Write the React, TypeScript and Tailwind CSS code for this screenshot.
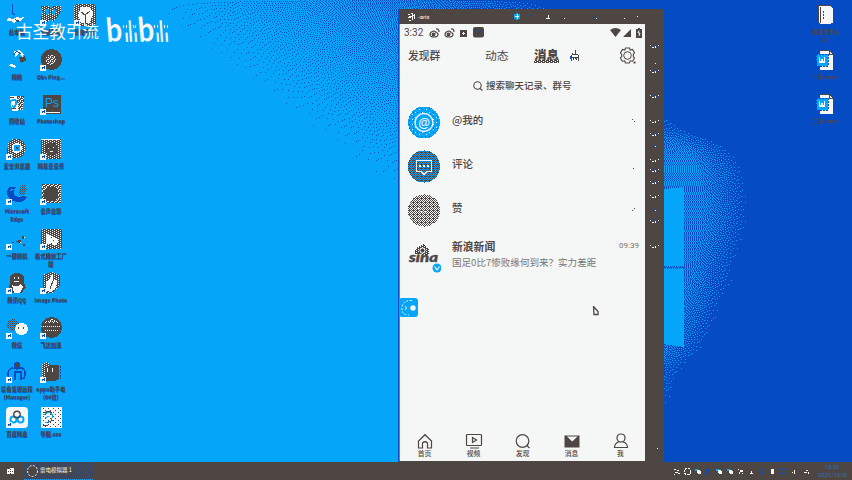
import React, { useMemo } from "react";

const LIGHT = "#05a5f9";
const DEEP = "#054bc3";
const INK = "#4e4643";
const PAPER = "#f5f7f6";

const W = 852;
const H = 462;

// Right outline of the glow behind the window logo, as [y, x] pairs.
const EDGE: number[][] = [
  [100, 655], [108, 665], [118, 674], [130, 692], [138, 716], [150, 734], [170, 745],
  [200, 749], [225, 748], [250, 739], [283, 732], [300, 724], [335, 711], [350, 702],
  [360, 692], [370, 682], [395, 673], [412, 664],
];

function edgeAt(y: number): number {
  for (let i = 1; i < EDGE.length; i++) {
    const [y0, x0] = EDGE[i - 1];
    const [y1, x1] = EDGE[i];
    if (y >= y0 && y <= y1) return x0 + ((x1 - x0) * (y - y0)) / (y1 - y0);
  }
  return 0;
}

function deepness(x: number, y: number): number {
  if (x >= 660) {
    const gap = edgeAt(y) - x;
    if (gap <= 0) return 1;
    const top = Math.max(0, Math.min(1, (y - 112) / 45));
    return 1 - Math.min(0.5, (gap / 48) * 0.5) * (0.35 + 0.65 * top);
  }
  const d = ((x - 130) * 0.74 - y) / 1.24;
  if (d <= 0) return 0;
  return Math.min(1, Math.pow(d / 275, 1.4) * 1.15);
}

function wallpaperPath(): string {
  let err = new Float32Array(W + 2);
  let out = "";
  for (let y = 0; y < H; y++) {
    const next = new Float32Array(W + 2);
    let run = -1;
    for (let x = 0; x < W; x++) {
      const base = deepness(x, y);
      let on = false;
      if (base >= 1) on = true;
      else if (base > 0.004) {
        const v = base + err[x + 1];
        on = v > 0.5;
        const e = v - (on ? 1 : 0);
        err[x + 2] += (e * 7) / 16;
        next[x] += (e * 3) / 16;
        next[x + 1] += (e * 5) / 16;
        next[x + 2] += e / 16;
      }
      if (on && run < 0) run = x;
      if ((!on || x === W - 1) && run >= 0) {
        const end = on ? x + 1 : x;
        out += `M${run} ${y}h${end - run}v1h${run - end}z`;
        run = -1;
      }
    }
    err = next;
  }
  return out;
}

// Pixels of a 32px disc for which the rule holds, as one path.
function discPath(rule: (x: number, y: number) => boolean): string {
  let out = "";
  for (let y = 0; y < 33; y++) {
    for (let x = 0; x < 32; x++) {
      const dx = x + 0.5 - 16;
      const dy = y + 0.5 - 16.5;
      if (dx * dx + dy * dy <= 258 && rule(x, y)) out += `M${x} ${y}h1v1h-1z`;
    }
  }
  return out;
}

const discChecks = discPath((x, y) => (x + y) % 2 === 0);
const discSparse = discPath((x, y) => (x + y) % 2 === 1 && x % 4 === 1 && y % 4 === 2);
const discDense = discPath((x, y) => (x + y) % 2 === 0 || (x % 4 === 1 && y % 4 === 0));

function Wallpaper() {
  const d = useMemo(wallpaperPath, []);
  return (
    <svg className="absolute inset-0" width={W} height={480} shapeRendering="crispEdges">
      <defs>
        <pattern id="ckInk" width="2" height="2" patternUnits="userSpaceOnUse">
          <path d="M0 0h1v1h-1zM1 1h1v1h-1z" fill={INK} />
        </pattern>
        <pattern id="ckDense" width="4" height="2" patternUnits="userSpaceOnUse">
          <rect width="4" height="2" fill={INK} />
          <path d="M0 0h1v1h-1zM2 1h1v1h-1z" fill={PAPER} />
        </pattern>
        <pattern id="ckWhite" width="4" height="4" patternUnits="userSpaceOnUse">
          <rect width="4" height="4" fill={INK} />
          <path d="M0 0h1v1h-1zM2 0h1v1h-1zM1 1h1v1h-1zM3 2h1v1h-1zM0 2h1v1h-1zM2 3h1v1h-1z" fill={PAPER} />
        </pattern>
        <pattern id="dotInk" width="5" height="4" patternUnits="userSpaceOnUse">
          <path d="M0 0h1v1h-1zM3 2h1v1h-1z" fill={INK} />
        </pattern>
        <pattern id="dotWhite" width="7" height="5" patternUnits="userSpaceOnUse">
          <path d="M0 1h1v1h-1zM4 3h1v1h-1z" fill={PAPER} />
        </pattern>
      </defs>
      <rect width={W} height={H} fill={LIGHT} />
      <path d={d} fill={DEEP} />
      <path d="M664 189l20-2v160l-20-3z" fill={LIGHT} />
      <path d="M664 266.500h21M665 268.500h20" stroke={DEEP} strokeDasharray="1 1" />
      <path d="M664 267.500h21" stroke={DEEP} strokeDasharray="2 1" />
    </svg>
  );
}

type Art = { art: React.ReactNode; label: string[]; plain?: boolean };

const columnA: Art[] = [
  { label: ["此电脑"], plain: true, art: <><path d="M6.500 0v9l2 2" stroke={DEEP} fill="none" /><path d="M2 14l5 1 4-2 3 1 4-1-3 4-4-1-3 3-3-2-4 0z" fill={PAPER} /><path d="M9 15l5 2-3 1z" fill={INK} /></> },
  { label: ["网络"], plain: true, art: <><path d="M8 2l5-1 5 4-1 3-4-3-4 3z" fill={PAPER} /><path d="M7 6l4-4 4 3M18 7l2 5" stroke={DEEP} fill="none" /><path d="M13 8l6 0 0 4-4 2z" fill={INK} /><path d="M2 16l4-1 4 2-1 2-3-1z" fill={PAPER} /></> },
  { label: ["回收站"], plain: true, art: <><path d="M4 3h14l-1 14-11 1z" fill="url(#ckWhite)" /><path d="M4 3h7l1 15-6 0z" fill={PAPER} /><path d="M5 8q6-4 5 3q-1 4-4 2" stroke={LIGHT} strokeWidth="2" fill="none" /><path d="M4 4l4 1M6 15l4 1" stroke={INK} /></> },
  { label: ["安全浏览器"], art: <><path d="M6 1h7l5 3 2 6-3 8-6 2H4l-3-5 1-9z" fill="url(#ckDense)" /><circle cx="11" cy="10" r="5" fill={PAPER} /><circle cx="11" cy="10" r="3.500" fill={LIGHT} /><path d="M10 9h2v2h-2z" fill={INK} /></> },
  { label: ["Microsoft", "Edge"], art: <><path d="M1 8q2-6 9-4l-2 3q-1 3 0 5 4 3 9 1l4 1q-4 6-10 5Q1 18 1 8z" fill={DEEP} /><path d="M14 3l5-2 2 5-3 6-5 0z" fill="url(#ckInk)" /><path d="M4 8l3-2" stroke={LIGHT} /></> },
  { label: ["一键刷机"], art: <><path d="M16 8h2v3h-2zM12 12h3v3h-3zM17 16h2v2h-2z" fill={INK} /><path d="M6 14h2M10 13h2" stroke={DEEP} /><path d="M18 9h1v1h-1zM14 14h1v1h-1z" fill={PAPER} /></> },
  { label: ["腾讯QQ"], art: <><path d="M4 7q0-6 7-6t7 6v4l2 5-2 1-2 4H6l-2-3-2-1 2-5z" fill={INK} /><path d="M6 13q5 3 9-1l2 3-3 6H8z" fill={PAPER} /><path d="M8 5h1v2h-1zM12 5h1v2h-1zM8 9h5v1h-5z" fill={PAPER} /></> },
  { label: ["微信"], art: <><ellipse cx="7" cy="8" rx="6" ry="6" fill="url(#ckInk)" /><ellipse cx="15.500" cy="12" rx="6.500" ry="6" fill={PAPER} /><path d="M12 10h1v2h-1zM17 10h1v2h-1z" fill={INK} /></> },
  { label: ["设备发现远程", "(Manager)"], art: <><path d="M3 17q-3-7 3-10l5 1 5-1q5 3 2 10l-3 1v-7h-6v8" fill="none" stroke={DEEP} strokeWidth="1.500" /><path d="M8 6q0-5 3-5t3 5z" fill={INK} stroke={DEEP} /></> },
  { label: ["百度网盘"], art: <g shapeRendering="auto"><rect x="0" y="1" width="22" height="21" rx="4" fill={PAPER} /><circle cx="7.500" cy="13.500" r="3" fill="none" stroke={LIGHT} strokeWidth="2" /><circle cx="14.500" cy="13.500" r="3" fill="none" stroke={LIGHT} strokeWidth="2" /><circle cx="11" cy="8.500" r="3.200" fill="none" stroke={INK} strokeWidth="1.400" /></g> },
];

const columnB: Art[] = [
  { label: ["视频剪辑"], art: <><path d="M1 2h8l2 3 2-3h8v5l-4 7-4 3-3-2-3 3-5 1-1-6 2-5z" fill="url(#ckDense)" /><path d="M5 5h4v5l-3 1zM13 5l4 1-3 6-2-3z" fill={LIGHT} /></> },
  { label: ["Obs Ping..."], art: <><circle cx="11.500" cy="10.500" r="10.500" fill={INK} /><circle cx="11" cy="11" r="5.500" fill="url(#ckWhite)" /></> },
  { label: ["Photoshop"], art: <><rect x="3" y="2" width="18" height="19" fill={INK} /><path d="M3 19.500h17" stroke={PAPER} /><text x="5" y="14" fontSize="12" className="font-['Liberation_Sans']" fill={LIGHT}>Ps</text></> },
  { label: ["网易云音乐"], art: <><rect x="1" y="1" width="20" height="20" rx="2" fill="url(#ckDense)" /><path d="M1 1.500h19" stroke={PAPER} /><circle cx="11.500" cy="11" r="6.500" fill={INK} /><path d="M8 10h1v1h-1zM13 9h1v1h-1zM10 13h3v1h-3z" fill={PAPER} /></> },
  { label: ["会声会影"], art: <><rect x="2" y="1" width="19" height="19" fill="url(#ckWhite)" /><circle cx="11" cy="11" r="7.500" fill={INK} /></> },
  { label: ["格式播放工厂", "版"], art: <><rect x="1" y="1" width="21" height="20" rx="3" fill="url(#ckDense)" /><path d="M6 5l12 6v4l-4 3-3-3-5 2z" fill={PAPER} /><path d="M11 9h1v1h-1zM13 12h1v1h-1z" fill={INK} /></> },
  { label: ["Image Photo"], art: <><path d="M3 3l8-3 9 3v10l-8 8H6l-3-3z" fill="url(#ckDense)" /><path d="M12 2l2 5 3 2-1 7-5 4-5-1 0-9 4-3z" fill={PAPER} /><path d="M10 17l4-11" stroke={INK} /></> },
  { label: ["飞达加速"], art: <><circle cx="11.500" cy="10.500" r="10.500" fill={INK} /><path d="M4 6q7-8 15 0z" fill="url(#ckWhite)" /><path d="M1 9.500h20M5 13.500h14" stroke={PAPER} strokeDasharray="1 1" /></> },
  { label: ["oppo助手电", "(64位)"], art: <><path d="M2 3l5-2 4 3h8v14l-4 2H2z" fill={INK} /><path d="M2 3l5-2 4 3-6 2v10H2z" fill="url(#ckDense)" /><path d="M7 7h1v4h-1zM12 7h1v4h-1z" fill={PAPER} /><path d="M20.500 5v13" stroke={DEEP} strokeDasharray="2 1" /></> },
  { label: ["导图.exe"], plain: true, art: <><rect x="1" y="1" width="21" height="21" fill={PAPER} /><rect x="1" y="1" width="21" height="21" fill="url(#dotInk)" /><path d="M3 9l6-3 4 3-2 6-6 2M5 12l4-2" stroke={LIGHT} fill="none" /><path d="M4 7l5-2 3 2M7 17l6-3M3 20l5-1" stroke={INK} fill="none" /></> },
];

const columnC: Art[] = [
  { label: ["剪映专业"], art: <><rect x="0" y="0" width="22" height="22" rx="4" fill="url(#ckDense)" /><path d="M7 3h9l3 6-3 10H7L4 11z" fill={PAPER} /><path d="M7 8l4 3 5-4M11 11v8" stroke={INK} fill="none" /></> },
];

const columnR: Art[] = [
  { label: ["新建文件夹", "(2)"], plain: true, art: <><path d="M4 1h11l4 3v15l-4 1-8 0-3-2z" fill={PAPER} /><path d="M4 1v17M5 1h12" stroke={INK} /><path d="M6 3v16" stroke={INK} /><path d="M9 7v9" stroke={INK} strokeDasharray="2 1" /></> },
  { label: ["一步.docx"], plain: true, art: <DocArt /> },
  { label: ["二步.docx"], plain: true, art: <DocArt /> },
];

function DocArt() {
  return (
    <>
      <path d="M6 1h9l4 4v16H6z" fill={PAPER} />
      <path d="M6 1h9l4 4h-4V1" fill="none" stroke={INK} />
      <path d="M2 5h12v12H3z" fill={LIGHT} stroke={DEEP} strokeDasharray="2 1" />
      <path d="M5.500 8v5h2v-2h1v2h2V8" fill="none" stroke={PAPER} strokeWidth="1.400" />
    </>
  );
}

function DesktopIcon({ art, label, plain }: Art) {
  return (
    <div className="flex w-[34px] flex-col items-center pt-px">
      <svg width="22" height="22" viewBox="0 0 22 22" shapeRendering="crispEdges" className="shrink-0">
        {art}
        {!plain && (
          <>
            <rect x="0" y="16" width="6" height="6" fill={PAPER} />
            <path d="M2 20v-2h3M4 17v3" stroke={DEEP} fill="none" />
          </>
        )}
      </svg>
      <div className="mt-[2px] flex flex-col items-center font-['Noto_Sans_CJK_SC',sans-serif] text-[5.3px] leading-[8px] font-bold whitespace-nowrap text-[#4e4643] [text-shadow:0_1px_0_#054bc3]">
        {label.map((l) => (
          <span key={l}>{l}</span>
        ))}
      </div>
    </div>
  );
}

function IconColumn({ items }: { items: Art[] }) {
  return (
    <div className="flex flex-col">
      {items.map((it, i) => (
        <div key={i} className={i % 2 === 0 || i === 3 ? "h-[45px]" : "h-[44px]"}>
          <DesktopIcon {...it} />
        </div>
      ))}
    </div>
  );
}

const letters = [
  { c: "b", x: 0, s: 33, w: 16, r: -5 },
  { c: "ı", x: 18, s: 18, w: 4, r: -4 },
  { c: "l", x: 22, s: 29, w: 4, r: -4 },
  { c: "ı", x: 27, s: 18, w: 4, r: -4 },
  { c: "b", x: 32, s: 34, w: 16, r: -5 },
  { c: "ı", x: 49, s: 18, w: 4, r: -4 },
  { c: "l", x: 53, s: 29, w: 4, r: -4 },
  { c: "ı", x: 58, s: 18, w: 4, r: -4 },
];

function Watermark() {
  return (
    <div className="absolute top-[15px] left-[16px] flex items-start text-[#f5f7f6]">
      <span className="mt-[4px] w-[90px] font-['Noto_Sans_CJK_SC',sans-serif] text-[16.6px] leading-[24px] whitespace-nowrap">古圣教引流</span>
      <svg width="64" height="31" viewBox="0 0 64 31" fill={PAPER} className="overflow-visible">
        {letters.map((l, i) => (
          <text key={i} transform={`translate(${l.x + 1} 27) rotate(${l.r})`} fontSize={l.s} textLength={l.w} lengthAdjust="spacingAndGlyphs" className="font-['Lato',sans-serif] font-bold">
            {l.c}
          </text>
        ))}
        <path d="M17.500 10v3M20.500 10v3M27 10l1 3M30 10l-1 3M48.500 10v3M51.500 10v3M58.500 10v3M61.500 10v3" stroke={PAPER} />
      </svg>
    </div>
  );
}

function WeiboGlyph() {
  return (
    <svg width="11" height="10" viewBox="0 0 11 10" fill="none" stroke={INK} strokeWidth="1.2">
      <path d="M4.500 3Q1 4 1 6.500T5 9t4-2.500Q9 4.500 7 4.800 7 3 4.500 3z" />
      <circle cx="4.500" cy="6.500" r="1.300" fill={INK} />
      <path d="M7 1q3-.5 3 3" />
    </svg>
  );
}

function StatusBar() {
  return (
    <div className="flex h-[17px] items-center pr-[3px] pl-[4px]">
      <span className="w-[25px] font-['Roboto',sans-serif] text-[10px] leading-none">3:32</span>
      <WeiboGlyph />
      <span className="w-[4px]" />
      <WeiboGlyph />
      <svg className="ml-[5px]" width="8" height="8" viewBox="0 0 8 8"><rect y="1" width="7" height="7" fill={INK} /><path d="M2 4.500h3M3.500 3v3" stroke={PAPER} /></svg>
      <svg className="ml-[5px]" width="12" height="11" viewBox="0 0 12 11"><rect width="11" height="10.500" rx="2" fill={INK} /><path d="M3 3h1v1h-1zM7 4h1v1h-1z" fill={DEEP} /></svg>
      <div className="ml-auto flex items-center gap-[2px]">
        <svg width="11" height="9" viewBox="0 0 11 9"><path d="M0 2Q5.500-2 11 2L5.500 9z" fill={INK} /></svg>
        <svg width="8" height="8" viewBox="0 0 8 8"><path d="M8 0v8H0z" fill={INK} /></svg>
        <svg className="ml-[3px]" width="6" height="10" viewBox="0 0 6 10"><path d="M0 1h2V0h2v1h2v9H0z" fill={INK} /><path d="M3 2.500L2 5h2L3 8" stroke={PAPER} fill="none" /></svg>
      </div>
    </div>
  );
}

function Header() {
  return (
    <div className="flex h-[28px] items-center pl-[8px] leading-none">
      <span className="w-[77px] text-[10.800px] font-medium">发现群</span>
      <span className="w-[49px] text-[11.800px]">动态</span>
      <span className="relative w-[36px] text-[12.500px] font-black">
        消息
        <svg className="absolute top-[11px] -left-px" width="27" height="3" shapeRendering="crispEdges"><path d="M2 0h24v3H0z" fill="url(#ckDense)" /></svg>
      </span>
      <svg width="10" height="11" viewBox="0 0 10 11" fill="none" stroke={INK} shapeRendering="crispEdges">
        <path d="M5.500 0v4M2.500 4v-1.500M2 4.500h6M1.500 5v5.500M8.500 5v5.500M3.500 10V7.500h3V10M1 7.500h8" /><path d="M.5 6v3M5 8.500h1" stroke={DEEP} />
      </svg>
      <svg className="mr-[9px] ml-auto" width="17" height="17" viewBox="0 0 17 17" fill="none" stroke={INK}>
        <path d="M6.500 1h4l.7 2 2.300-.6 2 3.300-1.200 1.800 0 2 1.200 1.500-2 3.200-2.300-.4-.8 2.200h-4l-.7-2.200-2.300.4-2-3.200L2.700 9.500v-2L1.500 5.700l2-3.300L5.800 3z" strokeWidth="1.100" />
        <circle cx="8.500" cy="8.500" r="3.800" /><path d="M14.500 15.500h2" strokeWidth="2" />
      </svg>
    </div>
  );
}

function Avatar({ kind }: { kind: number }) {
  return (
    <svg width="32" height="33" viewBox="0 0 32 33" shapeRendering="crispEdges">
      {kind === 0 && (
        <>
          <circle cx="16" cy="16.500" r="16" fill={LIGHT} />
          <path d={discSparse} fill={INK} />
          <circle cx="16" cy="16.500" r="14" fill="url(#dotWhite)" />
          <circle cx="16" cy="16.500" r="9" fill={LIGHT} stroke={PAPER} strokeWidth="1.400" shapeRendering="auto" />
          <text x="16" y="20.500" textAnchor="middle" fontSize="12" fontWeight="700" fill={PAPER} className="font-['Liberation_Sans',sans-serif]">@</text>
        </>
      )}
      {kind === 1 && (
        <>
          <circle cx="16" cy="16.500" r="16" fill={LIGHT} />
          <path d={discChecks} fill={INK} />
          <path d={discSparse} fill={DEEP} />
          <path d="M8.500 10.500h15v11h-5l-2.500 3-2.500-3h-5z" fill="none" stroke={PAPER} strokeWidth="1.400" />
          <path d="M11 16h2M15 16h2M19 16h2" stroke={PAPER} strokeWidth="2" />
          <path d="M25.500 11v10" stroke={DEEP} />
        </>
      )}
      {kind === 2 && (
        <>
          <path d={discDense} fill={INK} />
          <path d="M9 14.500h5M12 17.500h7" stroke={PAPER} strokeDasharray="3 1" />
        </>
      )}
    </svg>
  );
}

const rows = ["@我的", "评论", "赞"];

function MessageRow({ title, kind }: { title: string; kind: number }) {
  return (
    <div className="flex h-[44px] items-start pt-[2px] pr-[8px] pl-[8px]">
      <Avatar kind={kind} />
      <span className="ml-[12px] pt-[7px] text-[10.500px] leading-[14px] font-medium">{title}</span>
      <svg className="mt-[13px] ml-auto" width="6" height="6" shapeRendering="crispEdges">
        {kind === 0 && <path d="M1 0h1v1h-1zM3 2h1v1h-1z" fill={INK} />}
        {kind === 1 && <path d="M2 5h1v1h-1z" fill={INK} />}
        {kind === 2 && <path d="M3 1h1v1h-1zM1 3h1v1h-1z" fill={INK} />}
      </svg>
    </div>
  );
}

function SinaRow() {
  return (
    <div className="mt-[3px] flex items-start pr-[6px] pl-[8px]">
      <svg className="mt-[3px]" width="33" height="32" viewBox="0 0 33 32">
        <path d="M7 12Q6 6 12 4l4-2 2 3 3 3v5z" fill="url(#ckDense)" shapeRendering="crispEdges" />
        <circle cx="14.500" cy="8.500" r="2.500" fill={INK} stroke={PAPER} />
        <text x="1" y="20" fontSize="14" textLength="29" lengthAdjust="spacingAndGlyphs" fill={INK} stroke={INK} strokeWidth=".4" className="font-['Lato',sans-serif] font-black italic">sina</text>
        <circle cx="29" cy="26" r="4.500" fill={LIGHT} />
        <path d="M26.500 24.500l2.500 3.500 2.500-3.500" stroke={PAPER} strokeWidth="1.200" fill="none" />
      </svg>
      <div className="ml-[11px] flex flex-1 flex-col">
        <div className="flex items-center justify-between leading-[14px]">
          <span className="text-[10.800px] font-bold">新浪新闻</span>
          <span className="font-['Roboto',sans-serif] text-[8px] text-[#7a7573]">09:39</span>
        </div>
        <span className="mt-[2px] text-[9.550px] leading-[14px] whitespace-nowrap text-[#7a7573]">国足0比7惨败缘何到来？实力差距</span>
      </div>
    </div>
  );
}

const tabs = ["首页", "视频", "发现", "消息", "我"];

function TabGlyph({ i }: { i: number }) {
  return (
    <svg width="18" height="17" viewBox="0 0 18 17" fill="none" stroke={INK} strokeWidth="1.200">
      {i === 0 && <path d="M2.500 15V8L9 1.700 15.500 8v7h-4v-5q-2.500-2.500-5 0v5z" />}
      {i === 1 && <><rect x="1.500" y="1.500" width="15" height="11" rx="1" /><path d="M7.500 4.500l4 2.500-4 2.500zM5 15h9" /></>}
      {i === 2 && <><circle cx="8.500" cy="8" r="6.300" /><path d="M12.500 12l3 3.200" /></>}
      {i === 3 && <><rect x="1.500" y="2.500" width="15" height="12" fill={INK} stroke="none" /><path d="M4 3.500h10.500L9.200 8.500z" fill={PAPER} stroke="none" /></>}
      {i === 4 && <path d="M6.800 8.800Q5 7.500 5 5q0-4 4-4t4 4q0 2.500-1.800 3.800zM6.800 8.800Q2.500 10.500 2.500 14.500h13q0-4-4.300-5.700" />}
    </svg>
  );
}

function TabBar() {
  return (
    <div className="mt-auto flex h-[28px] pb-px">
      {tabs.map((t, i) => (
        <div key={t} className="flex w-[49px] flex-col items-center">
          <TabGlyph i={i} />
          <span className="text-[6.800px] leading-[7px] font-medium">{t}</span>
        </div>
      ))}
    </div>
  );
}

const sideMarks = [37, 54, 62, 87, 112, 125, 137, 151, 161, 173, 187, 201, 212, 237];

function SideStrip() {
  return (
    <svg width="19" height="437" shapeRendering="crispEdges">
      {sideMarks.map((y, i) => (
        <g key={y} transform={`translate(5 ${y - 16})`}>
          {i % 5 !== 1 && <path d="M0 0h1v1h-1zM2 2h2v1h-2zM5 1h1v2h-1zM8 0h1v1h-1z" fill={PAPER} />}
          {i % 5 === 1 && <path d="M5 1h1v1h-1z" fill={PAPER} />}
          {i % 3 !== 1 && <path d="M3 0h2v1h-2zM6 1h1v1h-1z" fill={DEEP} />}
        </g>
      ))}
      <path d="M12 424h1v1h-1z" fill={PAPER} />
    </svg>
  );
}

function TitleBar() {
  return (
    <div className="flex h-[15px] items-center pl-[9px] text-[#f5f7f6]">
      <svg width="8" height="8" viewBox="0 0 8 8" shapeRendering="crispEdges"><path d="M0 1h2M3 0h1v2h2V1h1M1 3h4M0 5l3-1M4 4v3M6 3l1 3M1 7h2" stroke={PAPER} fill="none" /></svg>
      <span className="ml-[2px] w-[96px] font-['Roboto',sans-serif] text-[6px] leading-none">-arix</span>
      <svg width="130" height="9" viewBox="0 0 130 9" shapeRendering="crispEdges">
        <path d="M0 2h2V1h2v1h2v5H4v1H2V7H0z" fill={LIGHT} /><path d="M1 4.500h4M3.500 2v5" stroke={PAPER} />
        <path d="M32 6h4v1h-4zM34 3h1v3h-1zM50 6h1v1h-1zM82 6h1v1h-1zM110 6h1v1h-1zM123 4h1v1h-1z" fill={PAPER} />
        <path d="M16 3h2v1h-2zM79 5h2v1h-2z" fill={DEEP} />
      </svg>
    </div>
  );
}

function PhoneWindow() {
  return (
    <div className="absolute top-[9px] left-[398px] flex h-[453px] w-[266px] flex-col border-l border-[#054bc3] bg-[#4e4643]">
      <TitleBar />
      <div className="flex h-[437px]">
        <div className="flex w-[246px] flex-col border-l border-[#05a5f9] bg-[#f5f7f6] font-['Noto_Sans_CJK_SC',sans-serif] text-[#4e4643]">
          <StatusBar />
          <Header />
          <div className="mb-px flex h-[34px] items-center pl-[73px]">
            <svg width="10" height="10" viewBox="0 0 10 10" fill="none" stroke={INK} strokeWidth="1.100"><circle cx="4.500" cy="4.500" r="3.700" /><path d="M7 7.500l2.500 2" /></svg>
            <span className="ml-[3px] text-[9.500px] leading-none font-medium">搜索聊天记录、群号</span>
          </div>
          {rows.map((r, i) => (
            <MessageRow key={r} title={r} kind={i} />
          ))}
          <SinaRow />
          <TabBar />
        </div>
        <SideStrip />
      </div>
    </div>
  );
}

function Taskbar() {
  return (
    <div className="relative flex h-[18px] items-center bg-[#4e4643] text-[#f5f7f6]">
      <svg className="ml-[7px]" width="7" height="7" viewBox="0 0 7 7" shapeRendering="crispEdges"><path d="M0 1h3V0h4v6H0z" fill={PAPER} /><path d="M3 1v1M1 3h1M3 3h1M5 3h1M3 5v1" stroke={INK} /></svg>
      <div className="ml-[10px] flex h-[18px] w-[69px] items-center border-b border-dotted border-[#05a5f9] pl-[3px] [background:repeating-conic-gradient(#2e4878_0_25%,#4e4643_0_50%)_0_0/4px_4px]">
        <svg width="11" height="12" viewBox="0 0 11 12"><ellipse cx="5.500" cy="6" rx="5" ry="5.500" fill={INK} stroke={PAPER} strokeDasharray="2 1.500" /></svg>
        <span className="ml-[2px] bg-[#4e4643] font-['Noto_Sans_CJK_SC',sans-serif] text-[5.500px] leading-[7px] whitespace-nowrap">雷电模拟器 1</span>
      </div>
      <svg className="ml-auto" width="140" height="9" viewBox="0 0 140 9" shapeRendering="crispEdges">
        <path d="M0 2h2v1h-2zM3 3h2v1h-2zM1 5h3v1h-3zM4 6h2v1h-2zM0 7h1v1h-1z" fill={PAPER} />
        <circle cx="13.500" cy="4.500" r="3.200" fill="none" stroke={PAPER} strokeDasharray="2 1" />
        {[21, 42, 53].map((x) => (
          <g key={x} transform={`translate(${x} 0)`}><path d="M0 2h3v2h-3z" fill={LIGHT} /><path d="M2 3h3v1h1v3h-3v-1h-1z" fill={PAPER} /></g>
        ))}
        <path d="M31 2h5v2h-3v4h-2z" fill={DEEP} />
        <path d="M64 2h1v1h-1zM66 3h3v2h-3zM65 5h1v2h-1zM68 6h1v1h-1zM77 4h1v2h-1zM76 6h3v1h-3zM97 2h3v5h-3zM118 5h1v1h-1zM120 3h1v4h-1zM130 5h3v1h-3zM132 3h2v1h-2zM134 5h1v2h-1z" fill={PAPER} />
        <path d="M85 4h2v1h-2zM88 2h4v1h-4zM88 5h2v2h-2zM105 2h8v1h-8zM106 6h6v1h-6z" fill={DEEP} />
      </svg>
      <div className="mr-[2px] flex w-[36px] flex-col items-center font-['Roboto',sans-serif] text-[6px] leading-[8px] text-[#2c6fc4]">
        <span>15:32</span>
        <span className="whitespace-nowrap">2021/10/5</span>
      </div>
    </div>
  );
}

export default function App() {
  return (
    <div className="relative flex h-[480px] w-[852px] flex-col overflow-hidden">
      <Wallpaper />
      <div className="relative flex h-[462px] items-start pt-[3px]">
        <IconColumn items={columnA} />
        <IconColumn items={columnB} />
        <IconColumn items={columnC} />
        <div className="mr-[10px] ml-auto">
          <IconColumn items={columnR} />
        </div>
        <PhoneWindow />
        <div className="absolute top-[298px] left-[399px]">
          <svg width="19" height="19" viewBox="0 0 19 19">
            <rect width="19" height="19" rx="3" fill={LIGHT} />
            <path d="M13 2.500Q4 2 3 9.500T10 17" fill="none" stroke={PAPER} strokeDasharray="2 1.500" />
            <circle cx="14" cy="10" r="2.700" fill={PAPER} /><path d="M6 8q3 1.500 0 4" stroke={PAPER} fill="none" />
          </svg>
        </div>
        <svg className="absolute top-[306px] left-[592px]" width="8" height="10" viewBox="0 0 8 10"><path d="M1.500.5L6 5.500v3H2z" fill={PAPER} stroke={INK} strokeWidth="1.300" /></svg>
        <Watermark />
      </div>
      <Taskbar />
    </div>
  );
}
